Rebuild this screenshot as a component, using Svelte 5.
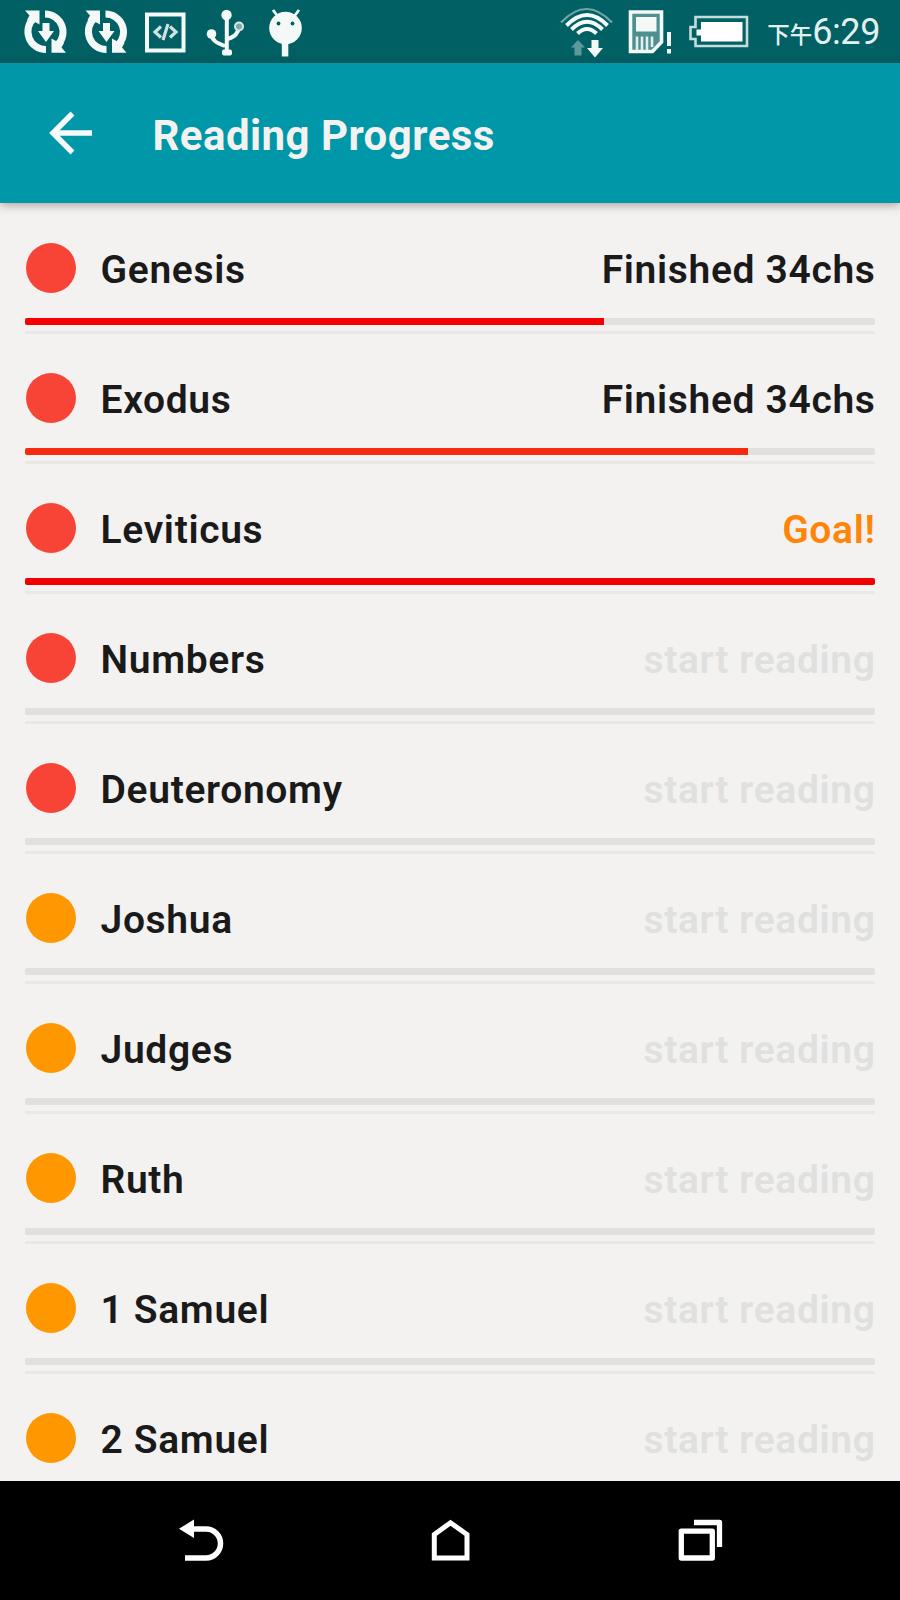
<script>
  const books = [
    { name: 'Genesis', color: '#f74436', status: 'Finished 34chs', kind: 'done', progress: 68.1, fill: '#f90000' },
    { name: 'Exodus', color: '#f74436', status: 'Finished 34chs', kind: 'done', progress: 85, fill: '#f72a10' },
    { name: 'Leviticus', color: '#f74436', status: 'Goal!', kind: 'goal', progress: 100, fill: '#f20000' },
    { name: 'Numbers', color: '#f74436' },
    { name: 'Deuteronomy', color: '#f74436' },
    { name: 'Joshua', color: '#ff9800' },
    { name: 'Judges', color: '#ff9800' },
    { name: 'Ruth', color: '#ff9800' },
    { name: '1 Samuel', color: '#ff9800' },
    { name: '2 Samuel', color: '#ff9800' }
  ];
</script>

<div class="screen">
  <div class="status">
    <svg width="320" height="63" viewBox="0 0 320 63" fill="#f4f9f8">
      {#each [0, 60.5] as dx}
        <g transform="translate({dx} 0)">
          <path d="M46 49.500 A18 18 0 0 1 34 18" fill="none" stroke="#f4f9f8" stroke-width="7" />
          <path d="M25 10.500 H39.500 V24.500 L35 22 L27 20 L29.500 15.500 Z" />
          <path d="M45 14 A18 18 0 0 1 57.500 45" fill="none" stroke="#f4f9f8" stroke-width="7" />
          <path d="M66 52.700 H51.500 V38.500 L56 41 L64 43 L61.500 47.500 Z" />
          <path d="M42.500 23 H49.500 V31 H54 L46 42 L38 31 H42.500 Z" />
        </g>
      {/each}
      <rect x="147" y="14.500" width="36.500" height="36" fill="none" stroke="#f4f9f8" stroke-width="4" />
      <path d="M161 26.500 L155 32 L161 37.500 M170 26.500 L176 32 L170 37.500 M168 24 L163 40" fill="none" stroke="#cfe1e0" stroke-width="3.200" />
      <circle cx="226.500" cy="15" r="5.200" />
      <rect x="222" y="49.500" width="10" height="6" rx="2" />
      <path d="M226.800 15 V51 M211.500 34 C212 41 217 43 225 46 M239 27 C238 34 235 36 228 39" fill="none" stroke="#f4f9f8" stroke-width="4" />
      <circle cx="211.500" cy="34" r="4.800" />
      <circle cx="239" cy="26.500" r="4" fill="#7aabaa" stroke="#dbe9e8" stroke-width="2" />
      <path d="M273 10 L279 18 M299 10 L293 18" stroke="#f4f9f8" stroke-width="2.800" />
      <circle cx="285.500" cy="28" r="16.300" />
      <rect x="281.800" y="42" width="6.500" height="14.500" />
      <circle cx="278.500" cy="23.500" r="1.900" fill="#006064" />
      <circle cx="292.500" cy="23.500" r="1.900" fill="#006064" />
    </svg>
    <div class="right">
      <svg width="212" height="63" viewBox="549.5 0 212 63" fill="#f4f9f8">
        <g fill="none" stroke="#f4f9f8" stroke-width="4">
          <path d="M560.500 22.500 Q586 -4.500 611.500 22.500" stroke="#6fa5a5" stroke-width="2.200" />
          <path d="M566 25.500 Q586.500 4.500 607 25.500" />
          <path d="M571 29.500 Q586.500 14 602 29.500" />
          <path d="M577 33.500 Q586.500 24.500 596 33.500" />
        </g>
        <path d="M577.500 40 L584.500 47.500 H581 V55.500 H574 V47.500 H570.500 Z" fill="#5c999a" />
        <path d="M591 40 H598 V48 H602.500 L594.500 57.500 L586.500 48 H591 Z" />
        <path d="M630 12 H661 V42 L652 51.500 H630 Z" fill="#4e8f90" stroke="#f4f9f8" stroke-width="3.600" />
        <rect x="635.500" y="17" width="20.500" height="14.500" />
        <path d="M636.500 36.500 V50 M641.500 36.500 V50 M646.500 36.500 V50 M651.500 36.500 V47" stroke="#e3eeee" stroke-width="2.600" />
        <path d="M666.500 32 H670.500 V46 H666.500 Z M666.500 49 H670.500 V53.500 H666.500 Z" />
        <path d="M695 17 H746.500 V46 H695 V39 H690 V27 H695 Z" fill="none" stroke="#c4dcdc" stroke-width="2.600" />
        <path d="M700.500 22 H742 V41.500 H700.500 V35.500 H696 V29.500 H700.500 Z" fill="#fff" />
      </svg>
      <div class="clock"><span class="period">下午</span><span class="time">6:29</span></div>
    </div>
  </div>

  <header>
    <svg width="46" height="46" viewBox="0 0 46 46" fill="none" stroke="#f7fafa" stroke-width="5.500">
      <path d="M44 23 H6 M24.500 3.500 L5 23 L24.500 42.500" />
    </svg>
    <h1>Reading Progress</h1>
  </header>

  <main>
    {#each books as book}
      <section>
        <div class="row">
          <i class="dot" style="background:{book.color}"></i>
          <span class="name">{book.name}</span>
          <span class="state {book.kind ?? 'idle'}">{book.status ?? 'start reading'}</span>
        </div>
        <div class="track">
          <div class="fill" style="width:{book.progress ?? 0}%;background:{book.fill ?? 'none'}"></div>
        </div>
        <div class="rule"></div>
      </section>
    {/each}
  </main>

  <nav>
    <svg width="46" height="46" viewBox="178 1517.5 46 46">
      <path d="M193 1528.500 H206 A14.500 14.500 0 0 1 206 1557.500 H185" fill="none" stroke="#fff" stroke-width="5.500" />
      <path d="M179 1528.300 L194 1519 V1537.500 Z" fill="#fff" />
    </svg>
    <svg width="46" height="46" viewBox="427 1517.5 46 46" fill="none" stroke="#fff" stroke-width="5">
      <path d="M434.300 1557.500 V1534 L450.500 1522.300 L467 1534 V1557.500 Z" />
    </svg>
    <svg width="46" height="46" viewBox="676 1517.5 46 46" fill="none" stroke="#fff" stroke-width="5.300" stroke-linejoin="round" overflow="visible">
      <path d="M681.300 1530.700 H712.300 V1557.500 H681.300 Z M694 1522 H719.500 V1546.500" />
    </svg>
  </nav>
</div>

<style>
  :global(body) { margin: 0; }
  .screen { width: 900px; height: 1600px; display: flex; flex-direction: column; overflow: hidden; background: #f3f2f1; font-family: Roboto, "Noto Sans CJK TC", sans-serif; }
  .status { height: 63px; flex: none; background: #006064; display: flex; justify-content: space-between; }
  .right { display: flex; padding-right: 20px; }
  svg { display: block; flex: none; }
  .clock { width: 118px; display: flex; justify-content: flex-end; color: #e4efef; white-space: nowrap; line-height: 65px; }
  .period { font: 500 22.5px/66px "Noto Sans CJK TC", sans-serif; }
  .time { font-size: 36px; letter-spacing: -.4px; }
  header { height: 140px; flex: none; box-sizing: border-box; background: #0097a9; display: flex; align-items: center; padding-left: 48px; box-shadow: 0 2px 9px rgba(70, 30, 30, .4); z-index: 1; }
  h1 { margin: 0 0 0 58.500px; padding-top: 5px; font-size: 42px; line-height: 50px; font-weight: 700; letter-spacing: .45px; color: #f3f2f1; white-space: nowrap; }
  main { flex: 1; min-height: 0; overflow: hidden; padding: 40px 25px 0; }
  section { height: 130px; }
  .row { height: 50px; display: flex; align-items: center; font-size: 39px; font-weight: 600; letter-spacing: .66px; color: #1a1a1a; }
  .dot { width: 50px; height: 50px; border-radius: 50%; flex: none; margin-left: .5px; }
  .name, .state { padding-top: 3px; }
  .name { margin-left: 25px; }
  .state { margin-left: auto; margin-right: -.6px; }
  .state.goal { color: #ff8509; }
  .state.idle { color: #e0e0df; }
  .track { height: 7px; margin-top: 25px; border-radius: 2px; background: #e1e0df; overflow: hidden; }
  .fill { height: 100%; }
  .rule { height: 3px; margin-top: 6px; background: #e9e8e7; }
  nav { height: 119px; flex: none; background: #000; display: flex; justify-content: center; align-items: center; gap: 203px; }
</style>
